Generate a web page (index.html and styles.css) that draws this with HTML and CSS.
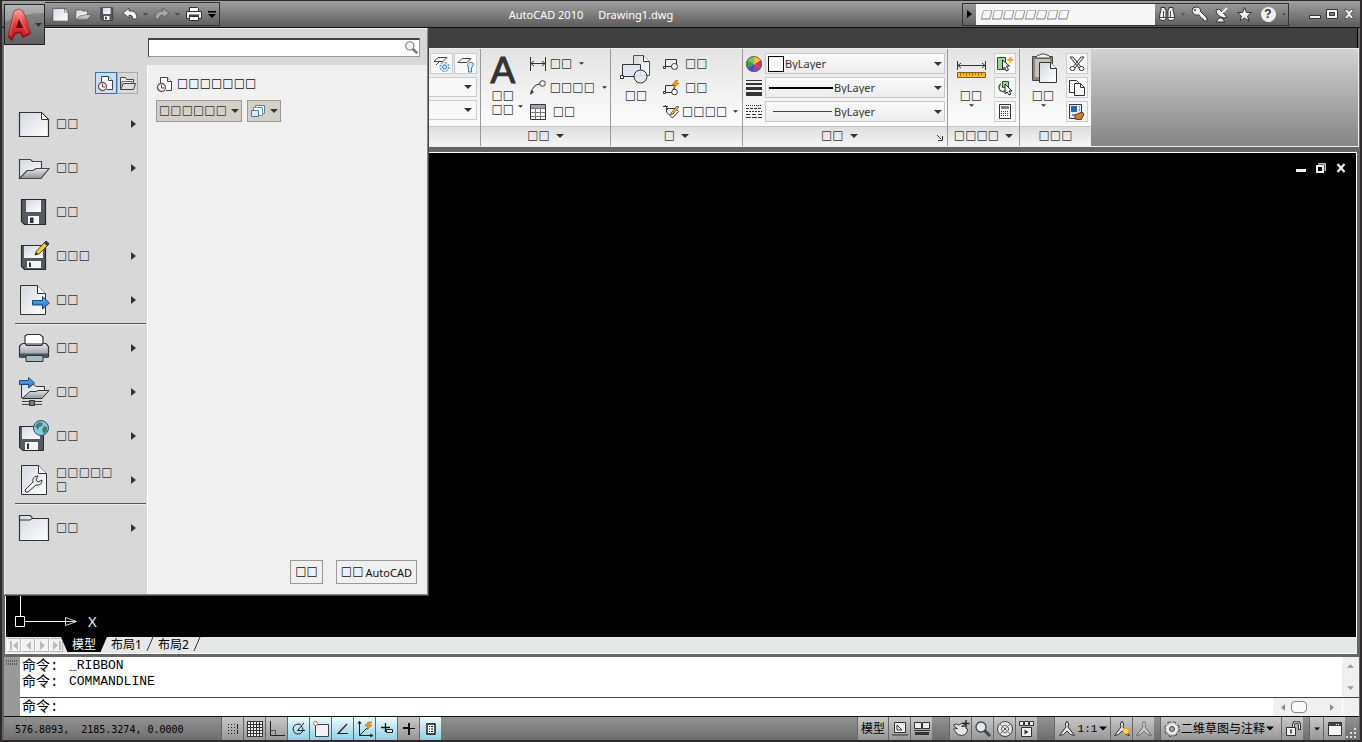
FILE: index.html
```html
<!DOCTYPE html>
<html lang="zh-CN">
<head>
<meta charset="utf-8">
<title>AutoCAD 2010 - Drawing1.dwg</title>
<link rel="stylesheet" href="styles.css">
</head>
<body>
<svg class="defs" aria-hidden="true">
  <defs>
    <linearGradient id="paper" x1="0" y1="0" x2="1" y2="1"><stop offset="0" stop-color="#d3d8e1"/><stop offset="1" stop-color="#ffffff"/></linearGradient>
    <linearGradient id="steel" x1="0" y1="0" x2="0" y2="1"><stop offset="0" stop-color="#e4e6ea"/><stop offset="1" stop-color="#8e939b"/></linearGradient>
    <linearGradient id="blue" x1="0" y1="0" x2="0" y2="1"><stop offset="0" stop-color="#64b4ee"/><stop offset="1" stop-color="#1d6fc4"/></linearGradient>
    <linearGradient id="red" x1="0" y1="0" x2="0" y2="1"><stop offset="0" stop-color="#f4aaa5"/><stop offset=".5" stop-color="#e2363a"/><stop offset="1" stop-color="#c3141c"/></linearGradient>
    <symbol id="down" viewBox="0 0 8 4"><path d="M0 0h8L4 4z" fill="currentColor"/></symbol>
    <symbol id="right" viewBox="0 0 5 8"><path d="M0 0l5 4-5 4z" fill="currentColor"/></symbol>
    <symbol id="new" viewBox="0 0 32 32"><path d="M1.500 4.500h22l7 7v17h-29z" fill="url(#paper)" stroke="#333" stroke-width="1.200"/><path d="M23.500 4.500v7h7z" fill="#fff" stroke="#333"/></symbol>
    <symbol id="open" viewBox="0 0 32 32"><path d="M1.500 26V7.500h11l2 2h9V17" fill="url(#paper)" stroke="#444" stroke-width="1.200"/><path d="M1.500 26.500L9 18.500h6l3-2h13l-8 10z" fill="url(#steel)" stroke="#444" stroke-width="1.200"/></symbol>
    <symbol id="save" viewBox="0 0 32 32"><path d="M3.500 3.500h24v25h-21l-3-3z" fill="#555a61" stroke="#25282c" stroke-width="1.200"/><path d="M8 4h15v12H8z" fill="url(#paper)"/><path d="M10 20h11v8H10z" fill="#f4f5f7"/><path d="M12 21.500h3.500V27H12z" fill="#30343a"/></symbol>
    <symbol id="recent" viewBox="0 0 18 18"><path d="M4.500 8V2.500h7l4 4v9H10" fill="#fff" stroke="#444"/><path d="M11.500 2.500v4h4" fill="#eef" stroke="#444"/><circle cx="5.500" cy="12.500" r="4" fill="#fff" stroke="#7a4a4a" stroke-width="1.300"/><path d="M5.500 10v3h2.500" fill="none" stroke="#7a3535"/></symbol>
    <symbol id="lens" viewBox="0 0 18 18"><path d="M10.500 10.500l5.500 5.500" stroke="#444" stroke-width="3"/><circle cx="7" cy="7" r="5" fill="#e1edf2" stroke="#444" stroke-width="1.300"/></symbol>
    <symbol id="printer" viewBox="0 0 32 32"><path d="M7 12V4l2-1.500h13L25 5v7z" fill="#fff" stroke="#333" stroke-width="1.200"/><path d="M1.500 14l3-2.500h2.500l1.500 2h15L25 11.500h3l2.500 3V25h-29z" fill="url(#steel)" stroke="#333" stroke-width="1.200"/><path d="M2 21.500h28V26H2z" fill="#4c545e"/><path d="M8 23.500h17v6H8z" fill="#a7bbc3" stroke="#333"/></symbol>
    <symbol id="smallprinter" viewBox="0 0 18 16"><path d="M4.500 6V1.500h8l1 1V6" fill="#fff" stroke="#333"/><path d="M1.500 5.500h15v7h-15z" fill="#eee" stroke="#333"/><path d="M4 9.500h10" stroke="#444" stroke-width="2"/><path d="M4.500 10.500h9v4h-9z" fill="#fff" stroke="#333"/></symbol>
    <symbol id="figure" viewBox="0 0 18 18"><path d="M9 1l1.700 3-.7 3 6.500 8.500-4-1L9 11l-3.500 3.500-4 1L8 7l-.7-3z" fill="#e4e4e4" stroke="#303030"/></symbol>
  </defs>
</svg>

<div class="window">
  <header class="titlebar">
    <nav class="quick" aria-label="快速访问工具栏">
      <button class="qb" aria-label="新建"><svg width="17" height="17"><use href="#new"/></svg></button>
      <button class="qb" aria-label="打开"><svg width="17" height="17"><use href="#open"/></svg></button>
      <button class="qb" aria-label="保存"><svg width="16" height="16"><use href="#save"/></svg></button>
      <button class="qb" aria-label="放弃"><svg width="16" height="14" viewBox="0 0 16 14"><path d="M1 6l6-5v3h3q5 1 5 8h-4q0-4-4-4v3z" fill="#f4f4f4" stroke="#333" stroke-width=".8"/></svg></button>
      <svg class="faint" width="5" height="3"><use href="#down"/></svg>
      <button class="qb" aria-label="重做"><svg width="16" height="14" viewBox="0 0 16 14"><path d="M15 6L9 1v3H6q-5 1-5 8h4q0-4 4-4v3z" fill="#a5a5a5" stroke="#555" stroke-width=".8"/></svg></button>
      <svg class="faint" width="5" height="3"><use href="#down"/></svg>
      <button class="qb" aria-label="打印"><svg width="18" height="16"><use href="#smallprinter"/></svg></button>
      <button class="qmore" aria-label="自定义"><svg width="8" height="7" viewBox="0 0 8 7"><path d="M0 0h8v1.500H0zM0 3h8L4 7z"/></svg></button>
    </nav>
    <h1 class="caption"><span>AutoCAD 2010</span><span>Drawing1.dwg</span></h1>
    <div class="info">
      <button class="expand" aria-label="展开"><svg width="5" height="8"><use href="#right"/></svg></button>
      <input class="help-search" type="text" placeholder="□□□□□□□□" aria-label="搜索帮助">
      <button class="ib" aria-label="搜索"><svg width="18" height="16" viewBox="0 0 18 16"><path d="M3 1.500h4v2h1v9q0 2-3 2t-3.500-2q0-5 1.500-8zM11 1.500h4v3q1.500 3 1.500 8 0 2-3.500 2t-3-2v-9h1z" fill="#f4f4f4" stroke="#333"/><path d="M8 6.500h2M2 11.500h6M10 11.500h6M5.500 5v6M12.500 5v6" stroke="#444"/></svg></button>
      <svg class="faint" width="4" height="3"><use href="#down"/></svg>
      <button class="ib key" aria-label="速博"><svg width="18" height="18" viewBox="0 0 18 18"><path d="M2 6q0-4 4-4 5 0 4.500 4.500L17 13v3h-3l-1-2-2-1-2-3q-6 1-7-4z" fill="#eee" stroke="#333"/><circle cx="5" cy="5" r="1" fill="#333"/></svg></button>
      <button class="ib" aria-label="通讯中心"><svg width="16" height="17" viewBox="0 0 16 17"><path d="M2 4q0 6 8 8l3-1L5 3zM5 12l-3 4h9l-3-4z" fill="#eee" stroke="#333"/><path d="M8 7l5-5" stroke="#eee" stroke-width="2"/></svg></button>
      <button class="ib" aria-label="收藏夹"><svg width="17" height="17" viewBox="0 0 17 17"><path d="M8.500 1.500l2 5h5l-4 3.500 1.500 5-4.500-3-4.500 3L5.500 10l-4-3.500h5z" fill="#eee" stroke="#333"/></svg></button>
      <button class="ib" aria-label="帮助"><span class="question">?</span></button>
      <svg class="faint" width="4" height="3"><use href="#down"/></svg>
    </div>
    <div class="winbtns">
      <button aria-label="最小化"><svg width="12" height="12" viewBox="0 0 12 12"><path d="M.500 7.500h11v3H.500z" fill="#f2f2f2" stroke="#333"/></svg></button>
      <button aria-label="最大化"><svg width="12" height="12" viewBox="0 0 12 12"><path d="M.500 1.500h11v9H.500zM3.500 4.500v3h5v-3z" fill="#f2f2f2" stroke="#333" fill-rule="evenodd"/></svg></button>
      <button aria-label="关闭"><svg width="12" height="12" viewBox="0 0 12 12"><path d="M1 1.500h3l2 2 2-2h3L7.500 6l3.500 4.500H8l-2-2-2 2H1L4.500 6z" fill="#f2f2f2" stroke="#333" stroke-width=".7"/></svg></button>
    </div>
  </header>

  <div class="tabstrip"></div>

  <section class="ribbon" aria-label="功能区">
    <div class="panel layers">
      <div class="panel-body">
        <div class="pair">
          <button class="tile" aria-label="冻结"><svg width="18" height="18" viewBox="0 0 18 18"><path d="M1 6.500l4-4h9l-4 4zM3 10l3-3" fill="#fff" stroke="#444"/><g stroke="#3f78ad" fill="#cfe8fa"><circle cx="11.500" cy="12" r="4.500" stroke-dasharray="2 1.500"/><circle cx="11.500" cy="12" r="2"/></g></svg></button>
          <button class="tile" aria-label="关闭图层"><svg width="18" height="18" viewBox="0 0 18 18"><path d="M1 7.500l4-4h9l-4 4z" fill="#fff" stroke="#444"/><path d="M11.500 13q-2-4 1-5.500 5-.5 3.500 3L14.500 13v4h-3z" fill="#d5ebfa" stroke="#3f78ad"/></svg></button>
        </div>
        <div class="stub"><svg width="8" height="4"><use href="#down"/></svg></div>
        <div class="stub"><svg width="8" height="4"><use href="#down"/></svg></div>
      </div>
      <div class="panel-title"></div>
    </div>

    <div class="panel annot">
      <div class="panel-body">
        <button class="big"><span class="letter">A</span><span>□□<br>□□</span></button>
        <svg class="side-arrow" width="5" height="3"><use href="#down"/></svg>
        <div class="rows">
          <button class="row"><svg width="16" height="14" viewBox="0 0 16 14"><path d="M.500 0v14M15.500 0v14M1 6.500h14M4 4L1 6.500 4 9M12 4l3 2.500L12 9" fill="none" stroke="#333"/></svg><span>□□</span><svg class="tiny" width="5" height="3"><use href="#down"/></svg></button>
          <button class="row"><svg width="16" height="15" viewBox="0 0 16 15"><path d="M1 14Q3 4 10 4" fill="none" stroke="#333"/><path d="M0 15l1-5 3 2z" fill="#333"/><circle cx="12.500" cy="3.500" r="2.800" fill="#fff" stroke="#333"/></svg><span>□□□□</span><svg class="tiny" width="5" height="3"><use href="#down"/></svg></button>
          <button class="row table"><svg width="16" height="16" viewBox="0 0 16 16"><path d="M.500 .500h15v15H.500z" fill="#fff" stroke="#333"/><path d="M1 1h14v3H1z" fill="#9aa3af"/><path d="M1 4.500h14M1 8.500h14M1 12.500h14M5.500 4v11M10.500 4v11" stroke="#777"/></svg><span>□□</span></button>
        </div>
      </div>
      <div class="panel-title"><span>□□</span><svg width="8" height="4"><use href="#down"/></svg></div>
    </div>

    <div class="panel block">
      <div class="panel-body">
        <button class="big"><svg width="32" height="32" viewBox="0 0 32 32"><path d="M13.500 2.500h10l6 6v14h-16z" fill="url(#paper)" stroke="#555"/><path d="M23.500 2.500v6h6" fill="#fff" stroke="#333"/><path d="M2.500 11.500h18v12h-18z" fill="#dfe6f1" stroke="#333"/><circle cx="20.500" cy="23.500" r="6.500" fill="#e3e9f1" fill-opacity=".9" stroke="#333"/><path d="M.500 22.500h3v3h-3z" fill="#fff" stroke="#333"/></svg><span>□□</span></button>
        <div class="rows">
          <button class="row"><svg width="16" height="14" viewBox="0 0 16 14"><path d="M2.500 2.500h11v7h-11z" fill="#e9eef4" stroke="#333"/><circle cx="11.500" cy="9.500" r="3" fill="#fff" stroke="#333"/><path d="M.500 9.500h2v2h-2z" fill="#fff" stroke="#333"/></svg><span>□□</span></button>
          <button class="row"><svg width="16" height="16" viewBox="0 0 16 16"><path d="M2.500 5.500h9v7h-9z" fill="#e9eef4" stroke="#333"/><circle cx="11.500" cy="12" r="2.800" fill="#fff" stroke="#333"/><path d="M.500 11.500h2v2h-2z" fill="#fff" stroke="#333"/><path d="M13 0L9 5h3l-2 4 6-6h-3l2-3z" fill="#f3a21d" stroke="#a8690b" stroke-width=".6"/></svg><span>□□</span></button>
          <button class="row tag"><svg width="16" height="16" viewBox="0 0 16 16"><path d="M3.500 4.500h9l3 3-6 6.500-6-6z" fill="#fff" stroke="#333"/><path d="M0 2.500h5M2 1l3 5" stroke="#333" fill="none"/><path d="M8 9l6-7 2 1-6 7-3 1z" fill="#f0b93c" stroke="#443214" stroke-width=".7"/></svg><span>□□□□</span><svg class="tiny" width="5" height="3"><use href="#down"/></svg></button>
        </div>
      </div>
      <div class="panel-title"><span>□</span><svg width="8" height="4"><use href="#down"/></svg></div>
    </div>

    <div class="panel props">
      <div class="panel-body">
        <div class="prop"><svg width="16" height="16" viewBox="0 0 16 16"><path d="M8 8V0a8 8 0 0 0-7 4z" fill="#7ac15a"/><path d="M8 8L1 4a8 8 0 0 0 0 8z" fill="#3f9b47"/><path d="M8 8l-7 4a8 8 0 0 0 7 4z" fill="#4055c0"/><path d="M8 8v8a8 8 0 0 0 7-4z" fill="#9a46ae"/><path d="M8 8l7 4a8 8 0 0 0 0-8z" fill="#df362e"/><path d="M8 8l7-4a8 8 0 0 0-7-4z" fill="#f2c53d"/><circle cx="8" cy="8" r="7.500" fill="none" stroke="#666"/></svg>
          <div class="combo color"><select aria-label="颜色"><option>ByLayer</option></select><span class="swatch"></span><svg class="drop" width="8" height="4"><use href="#down"/></svg></div></div>
        <div class="prop"><svg width="16" height="16" viewBox="0 0 16 16"><path d="M0 0h16v1H0zM0 3h16v2H0zM0 7h16v3H0zM0 12h16v4H0z" fill="#333"/></svg>
          <div class="combo line"><select aria-label="线宽"><option>ByLayer</option></select><span class="stroke thick"></span><svg class="drop" width="8" height="4"><use href="#down"/></svg></div></div>
        <div class="prop"><svg width="16" height="16" viewBox="0 0 16 16"><path d="M0 1.500h16" stroke="#333" stroke-dasharray="1 1"/><path d="M0 4.500h16" stroke="#333" stroke-dasharray="3 1"/><path d="M0 7.500h16" stroke="#333" stroke-dasharray="2 1"/><path d="M0 10.500h16" stroke="#333" stroke-dasharray="4 2"/><path d="M0 13.500h16" stroke="#333" stroke-dasharray="5 1"/></svg>
          <div class="combo line"><select aria-label="线型"><option>ByLayer</option></select><span class="stroke"></span><svg class="drop" width="8" height="4"><use href="#down"/></svg></div></div>
      </div>
      <div class="panel-title"><span>□□</span><svg width="8" height="4"><use href="#down"/></svg><button class="launcher" aria-label="对话框"><svg width="6" height="6" viewBox="0 0 6 6"><path d="M0 0l4 4M5.500 1v4.500H1" fill="none" stroke="#333"/></svg></button></div>
    </div>

    <div class="panel utils">
      <div class="panel-body">
        <button class="big"><svg width="32" height="32" viewBox="0 0 32 32"><path d="M2.500 8v9M30.500 8v9M3 12.500h27M6 10l-3 2.500L6 15M27 10l3 2.500-3 2.500" fill="none" stroke="#333"/><path d="M2.500 19.500h28v5h-28z" fill="#f4bd31" stroke="#8a5c08"/><path d="M5.500 20v3M8.500 20v2M11.500 20v3M14.500 20v2M17.500 20v3M20.500 20v2M23.500 20v3M26.500 20v2" stroke="#9b6d10"/></svg><span>□□</span><svg class="tiny" width="5" height="3"><use href="#down"/></svg></button>
        <div class="tiles">
          <button class="tile" aria-label="全部选择"><svg width="18" height="16" viewBox="0 0 18 16"><path d="M1.500 1.500h8v12h-8z" fill="#9fd497" stroke="#24562a"/><path d="M6.500 4v9l2-2 2 4 2-1-2-4h3z" fill="#fff" stroke="#222"/><path d="M14 1l-3 4h3l-1 3 5-5h-3l1-2z" fill="#f4a51f"/></svg></button>
          <button class="tile" aria-label="快速选择"><svg width="18" height="16" viewBox="0 0 18 16"><path d="M6.500 1.500h6v6h-6z" fill="#9fd497" stroke="#24562a"/><path d="M5 4a4 4 0 1 0 4 7" fill="none" stroke="#356e3a" stroke-width="1.500"/><path d="M9 4v10l2-2 2 3 2-1-2-3h3z" fill="#fff" stroke="#222"/></svg></button>
          <button class="tile" aria-label="计算器"><svg width="12" height="15" viewBox="0 0 12 15"><path d="M.500 .500h11v14H.500z" fill="#fff" stroke="#333"/><path d="M2 2h8v3H2z" fill="#74808f"/><path d="M2 7.500h8M2 9.500h8M2 11.500h8" stroke="#333" stroke-dasharray="1 1"/></svg></button>
        </div>
      </div>
      <div class="panel-title"><span>□□□□</span><svg width="8" height="4"><use href="#down"/></svg></div>
    </div>

    <div class="panel clip">
      <div class="panel-body">
        <button class="big"><svg width="32" height="32" viewBox="0 0 32 32"><path d="M5.500 3.500h20v24h-20z" fill="#8c8680" stroke="#47423d"/><path d="M8 6h15v18H8z" fill="#c7c1b8"/><path d="M8 5l3-3h2l1-1h4l1 1h2l3 3z" fill="#f4f4f4" stroke="#444"/><path d="M12.500 9.500h11l6 6v14h-17z" fill="url(#paper)" stroke="#333"/><path d="M23.500 9.500v6h6" fill="#fff" stroke="#333"/></svg><span>□□</span><svg class="tiny" width="5" height="3"><use href="#down"/></svg></button>
        <div class="tiles">
          <button class="tile" aria-label="剪切"><svg width="16" height="16" viewBox="0 0 16 16"><path d="M1 1l3 0 8 10-2 1zM15 1l-3 0-8 10 2 1z" fill="#fff" stroke="#333"/><ellipse cx="3.500" cy="12.500" rx="2.500" ry="2" fill="#fff" stroke="#333"/><ellipse cx="12.500" cy="12.500" rx="2.500" ry="2" fill="#fff" stroke="#333"/></svg></button>
          <button class="tile" aria-label="复制"><svg width="16" height="16" viewBox="0 0 16 16"><path d="M.500 .500h7l2 2v10h-9z" fill="#fff" stroke="#333"/><path d="M5.500 3.500h6l4 4v8h-10z" fill="#fff" stroke="#333"/><path d="M11.500 3.500v4h4" fill="none" stroke="#333"/></svg></button>
          <button class="tile" aria-label="特性匹配"><svg width="16" height="16" viewBox="0 0 16 16"><path d="M.500 .500h12v14H.500z" fill="#e5edf5" stroke="#243a59"/><path d="M2 2h6v6H2z" fill="#2d67a8"/><path d="M10 3h1M10 6h1M3 11h3" stroke="#333"/><path d="M6 11l7-3 2 2-3 6-6-1z" fill="#c9812e" stroke="#5c3610"/></svg></button>
        </div>
      </div>
      <div class="panel-title"><span>□□□</span></div>
    </div>
  </section>

  <main class="drawing">
    <div class="docbtns">
      <button aria-label="最小化"><svg width="10" height="10" viewBox="0 0 10 10"><path d="M0 6h10v3H0z" fill="#eee"/></svg></button>
      <button aria-label="还原"><svg width="10" height="10" viewBox="0 0 10 10"><path d="M2 .800h7.200V8" fill="none" stroke="#eee" stroke-width="1.200"/><path d="M1 3h6v6H1z" fill="none" stroke="#eee" stroke-width="2"/></svg></button>
      <button aria-label="关闭"><svg width="10" height="10" viewBox="0 0 10 10"><path d="M1.500 1l7 8M8.500 1l-7 8" stroke="#eee" stroke-width="2.200"/></svg></button>
    </div>
    <div class="ucs"><svg width="74" height="60" viewBox="0 0 74 60"><path d="M6.500 0v39M11 44.500h40" stroke="#fff"/><path d="M1.500 39.500h9v10h-9z" fill="#000" stroke="#fff"/><path d="M51.500 40.500l11 4-11 4zM52 44.500h10" fill="#000" stroke="#ddd"/></svg><span>X</span></div>
  </main>

  <nav class="layouts" aria-label="布局">
    <div class="steps">
      <button aria-label="第一个"><svg width="9" height="9" viewBox="0 0 9 9"><path d="M1 0v9" stroke="#bbb" stroke-width="2"/><path d="M8 0v9L3 4.500z" fill="#bbb"/></svg></button>
      <button aria-label="上一个"><svg width="5" height="9" viewBox="0 0 5 9"><path d="M5 0v9L0 4.500z" fill="#bbb"/></svg></button>
      <button aria-label="下一个"><svg width="5" height="9" viewBox="0 0 5 9"><path d="M0 0v9l5-4.500z" fill="#bbb"/></svg></button>
      <button aria-label="最后一个"><svg width="9" height="9" viewBox="0 0 9 9"><path d="M8 0v9" stroke="#bbb" stroke-width="2"/><path d="M1 0v9l5-4.500z" fill="#bbb"/></svg></button>
    </div>
    <button class="layout active">模型</button>
    <button class="layout">布局1</button><svg class="slant" width="8" height="14" viewBox="0 0 8 14"><path d="M1 14L7 0" stroke="#333"/></svg>
    <button class="layout">布局2</button><svg class="slant" width="8" height="14" viewBox="0 0 8 14"><path d="M1 14L7 0" stroke="#333"/></svg>
  </nav>

  <section class="command" aria-label="命令行">
    <div class="grip"><svg width="12" height="6" viewBox="0 0 12 6"><path d="M0 1h12M0 4h12" stroke="#222" stroke-dasharray="1 1"/></svg></div>
    <div class="console">
      <div class="history">
        <div class="log"><p><span class="prompt">命令:</span>_RIBBON</p><p><span class="prompt">命令:</span>COMMANDLINE</p></div>
        <div class="vscroll"><svg width="7" height="4"><use href="#down"/></svg><svg width="7" height="4"><use href="#down"/></svg></div>
      </div>
      <div class="entry">
        <label class="prompt" for="cmd">命令:</label><input id="cmd" type="text">
        <div class="hscroll"><svg width="4" height="7"><use href="#right"/></svg><span class="thumb"></span><svg width="4" height="7"><use href="#right"/></svg></div>
        <div class="corner"></div>
      </div>
    </div>
  </section>

  <footer class="status">
    <output class="coords">576.8093,  2185.3274, 0.0000</output>
    <div class="toggles">
      <button aria-label="捕捉"><svg width="16" height="16" viewBox="0 0 16 16"><path d="M3 3.500h8M3 6.500h8M3 9.500h8M3 12.500h10" stroke="#222" stroke-dasharray="1 2"/><path d="M12.500 3v10" stroke="#222" stroke-dasharray="5 1"/></svg></button>
      <button aria-label="栅格"><svg width="16" height="16" viewBox="0 0 16 16"><path d="M0 0h16v16H0z" fill="#eee"/><path d="M0 .500h16M0 3.500h16M0 6.500h16M0 9.500h16M0 12.500h16M0 15.500h16M.500 0v16M3.500 0v16M6.500 0v16M9.500 0v16M12.500 0v16M15.500 0v16" stroke="#333"/></svg></button>
      <button aria-label="正交"><svg width="16" height="16" viewBox="0 0 16 16"><path d="M1.500 0v14.500H16" fill="none" stroke="#222"/><path d="M2 9.500h4.500V14" fill="none" stroke="#555"/></svg></button>
      <button class="on" aria-label="极轴"><svg width="16" height="16" viewBox="0 0 16 16"><path d="M10 4a5 5 0 1 0 2 5M6.500 9.500H14M6.500 9.500L13 2" fill="none" stroke="#222"/><path d="M10 5q2 1 2 4" fill="none" stroke="#222"/></svg></button>
      <button class="on" aria-label="对象捕捉"><svg width="16" height="16" viewBox="0 0 16 16"><path d="M2.500 3.500h13v12h-13z" fill="#f2f2f2" stroke="#444"/><circle cx="2.500" cy="2.500" r="2" fill="#fff" stroke="#e07020"/></svg></button>
      <button class="on" aria-label="对象追踪"><svg width="16" height="16" viewBox="0 0 16 16"><path d="M12 3L3 12.500h10" fill="none" stroke="#222" stroke-width="1.200"/></svg></button>
      <button class="on" aria-label="动态 UCS"><svg width="16" height="16" viewBox="0 0 16 16"><path d="M2.500 1v13.500H15M1 3l1.500-3L4 3M13 13l3 1.500-3 1.500M3 14l7-7" fill="none" stroke="#222"/><path d="M11 1L8 5h3l-1 4 5-5h-3l3-3z" fill="#f3a21d" stroke="#95600e" stroke-width=".5"/></svg></button>
      <button class="on" aria-label="动态输入"><svg width="16" height="16" viewBox="0 0 16 16"><path d="M2 6.500h9M6.500 2v9" stroke="#111" stroke-width="1.300"/><path d="M7.500 8.500h6v3h-6z" fill="#eee" stroke="#222"/></svg></button>
      <button aria-label="线宽"><svg width="16" height="16" viewBox="0 0 16 16"><path d="M2 7.500h12" stroke="#111"/><path d="M2 7h6" stroke="#111" stroke-width="2"/><path d="M8 2v12" stroke="#111" stroke-width="2"/></svg></button>
      <button class="on" aria-label="快捷特性"><svg width="16" height="16" viewBox="0 0 16 16"><path d="M4 3h8v10H4z" fill="#fff" stroke="#111" stroke-width="1.400"/><path d="M6 5.500h4M6 8h4M6 10.500h4" stroke="#111" stroke-dasharray="1 1 2 1"/></svg></button>
    </div>
    <div class="tray">
      <div class="group"><button class="word">模型</button><button aria-label="模型布局"><svg width="16" height="16" viewBox="0 0 16 16"><path d="M2.500 1.500h11v10h-11z" fill="#eee" stroke="#333"/><path d="M5 4v5h5z" fill="none" stroke="#333"/><path d="M0 14h16" stroke="#333"/></svg></button><button aria-label="快速查看"><svg width="16" height="16" viewBox="0 0 16 16"><path d="M.500 1.500h7v6h-7zM8.500 1.500h7v6h-7z" fill="#eee" stroke="#333"/><path d="M0 9.500h16" stroke="#333"/><path d="M1 12.500h14" stroke="#333" stroke-width="3"/></svg></button></div>
      <div class="group"><button aria-label="平移"><svg width="18" height="18" viewBox="0 0 18 18"><path d="M1.500 5q3-2 5 0l5-2q2 0 1 2l-3 1.500 4-.5q2 1 0 2l2 1q0 6-6 6.500-5 0-6-4L1.500 9l1-1 3 1z" fill="#e5e5e5" stroke="#333"/><path d="M14 0v7M10.500 3.500h7" stroke="#222" stroke-width="1.300"/></svg></button><button aria-label="缩放"><svg width="18" height="18"><use href="#lens"/></svg></button><button aria-label="控制盘"><svg width="18" height="18" viewBox="0 0 18 18"><circle cx="9" cy="9" r="7.500" fill="#e3e3e3" stroke="#444"/><circle cx="9" cy="9" r="3.500" fill="#fff" stroke="#555"/><path d="M4 4l10 10M14 4L4 14" stroke="#777"/><circle cx="9" cy="9" r="1.300" fill="#555"/></svg></button><button aria-label="运动显示"><svg width="16" height="16" viewBox="0 0 16 16"><path d="M.500 .500h4v4h-4zM5.500 .500h4v4h-4zM10.500 .500h4v4h-4zM2.500 6.500h10v9h-10z" fill="#eee" stroke="#333"/><path d="M5.500 8.500v5l4-2.500z" fill="#333"/></svg></button></div>
      <div class="group"><button class="scale"><svg width="18" height="18"><use href="#figure"/></svg><span>1:1</span><svg width="8" height="5"><use href="#down"/></svg></button><button aria-label="注释可见性"><svg width="18" height="18" viewBox="0 0 18 18"><use href="#figure"/><circle cx="13" cy="11" r="3" fill="#ffd257" stroke="#e89a31"/></svg></button><button aria-label="自动缩放"><svg class="dim" width="18" height="18"><use href="#figure"/></svg></button></div>
      <div class="group near"><button class="workspace"><svg width="16" height="16" viewBox="0 0 16 16"><circle cx="8" cy="8" r="6.200" fill="none" stroke="#444" stroke-width="3.200" stroke-dasharray="2.800 2.070"/><circle cx="8" cy="8" r="5.800" fill="#ececec"/><circle cx="8" cy="8" r="6" fill="none" stroke="#ececec" stroke-width="1.600" stroke-dasharray="1.800 2.910" stroke-dashoffset="-.5"/><circle cx="8" cy="8" r="2.500" fill="#aaa" stroke="#444"/></svg><span>二维草图与注释</span><svg width="8" height="5"><use href="#down"/></svg></button><button aria-label="锁定"><svg width="16" height="16" viewBox="0 0 16 16"><path d="M8.500 8V4q0-3 3-3t3 3v5" fill="none" stroke="#333" stroke-width="3"/><path d="M8.500 8V4q0-3 3-3t3 3v4" fill="none" stroke="#eee"/><path d="M1.500 6.500h9v8h-9z" fill="#eee" stroke="#333"/><path d="M6 8.500v4" stroke="#333" stroke-width="1.500"/></svg></button></div>
      <div class="group near"><button class="slim" aria-label="状态栏菜单"><svg width="6" height="4"><use href="#down"/></svg></button><button aria-label="全屏显示"><svg width="14" height="14" viewBox="0 0 14 14"><path d="M.500 .500h13v13H.500z" fill="#f4f4f4" stroke="#333"/><path d="M1 1h12v3H1z" fill="#444"/><path d="M8 2.500h4" stroke="#fff" stroke-dasharray="1 1"/></svg></button></div>
      <svg class="sizer" width="12" height="12" viewBox="0 0 12 12"><path d="M8 1h2v2H8zM4 5h2v2H4zM8 5h2v2H8zM0 9h2v2H0zM4 9h2v2H4zM8 9h2v2H8z" fill="#ddd"/></svg>
    </div>
  </footer>

  <aside class="appmenu">
    <div class="menu-top"><input type="text" aria-label="搜索命令"><svg width="15" height="15"><use href="#lens"/></svg></div>
    <div class="menu-main">
      <nav class="menu-side">
        <div class="views"><button class="on" aria-label="最近使用的文档"><svg width="18" height="18"><use href="#recent"/></svg></button><button aria-label="打开的文档"><svg width="18" height="18" viewBox="0 0 18 18"><path d="M1.500 15V3.500h5l1 2h7v3" fill="#eee" stroke="#444"/><path d="M3 12V7.500h10V9" fill="#fff" stroke="#666"/><path d="M1.500 15.500l3-6h12l-2 6z" fill="#ddd" stroke="#444"/></svg></button></div>
        <button class="item"><svg width="32" height="32"><use href="#new"/></svg><span>□□</span><svg class="more" width="5" height="8"><use href="#right"/></svg></button>
        <button class="item"><svg width="32" height="32"><use href="#open"/></svg><span>□□</span><svg class="more" width="5" height="8"><use href="#right"/></svg></button>
        <button class="item"><svg width="32" height="32"><use href="#save"/></svg><span>□□</span></button>
        <button class="item"><svg width="32" height="32" viewBox="0 0 32 32"><path d="M3.500 5.500h24v24h-21l-3-3z" fill="#555a61" stroke="#25282c" stroke-width="1.200"/><path d="M6 6h19v12H6z" fill="url(#paper)"/><path d="M9 21h14v7H9z" fill="#f4f5f7"/><path d="M11 22.500h2V27h-2z" fill="#30343a"/><path d="M17 15l1.500-4L28 1l3 3-10 10z" fill="#f3c744" stroke="#5b4510"/><path d="M26 3l2-2.500 3.500 3L29 6z" fill="#3b3f45"/><path d="M17 15l1-3 2 2z" fill="#333"/></svg><span>□□□</span><svg class="more" width="5" height="8"><use href="#right"/></svg></button>
        <button class="item"><svg width="32" height="32" viewBox="0 0 32 32"><path d="M2.500 1.500h17l8 8v21h-25z" fill="url(#paper)" stroke="#333"/><path d="M19.500 1.500v8h8" fill="#fff" stroke="#333"/><path d="M14.500 16.500h10v-4l7 6.500-7 6v-4h-10z" fill="url(#blue)" stroke="#174a81"/></svg><span>□□</span><svg class="more" width="5" height="8"><use href="#right"/></svg></button>
        <hr>
        <button class="item"><svg width="32" height="32"><use href="#printer"/></svg><span>□□</span><svg class="more" width="5" height="8"><use href="#right"/></svg></button>
        <button class="item"><svg width="32" height="32" viewBox="0 0 32 32"><path d="M3.500 22V8.500h12l3 2h8V16" fill="url(#paper)" stroke="#333"/><path d="M4 22.500l8-7h6l2-1h11l-7 8z" fill="url(#steel)" stroke="#333"/><path d="M1.500 4.500h9v-3l6 5.500-6 5v-3.500h-9z" fill="url(#blue)" stroke="#174a81"/><path d="M4 25.500h20M4 28.500h20" stroke="#444"/><path d="M11.500 24.500h5v5h-5z" fill="#777" stroke="#333"/></svg><span>□□</span><svg class="more" width="5" height="8"><use href="#right"/></svg></button>
        <button class="item"><svg width="32" height="32" viewBox="0 0 32 32"><path d="M1.500 6.500h24v24h-21l-3-3z" fill="#555a61" stroke="#25282c"/><path d="M4 7h18v12H4z" fill="url(#paper)"/><path d="M7 22h13v8H7z" fill="#f5f5f5"/><path d="M9 23.500h2V29H9z" fill="#333"/><circle cx="23" cy="8" r="7.500" fill="#8cc5dc" stroke="#25536a"/><path d="M17 6l4-4 4 1-1 3-3 1-1 3zM26 6l3 1v4l-3 3-2-4z" fill="#39856c"/></svg><span>□□</span><svg class="more" width="5" height="8"><use href="#right"/></svg></button>
        <button class="item"><svg width="32" height="32" viewBox="0 0 32 32"><path d="M3.500 1.500h17l8 8v21h-25z" fill="url(#paper)" stroke="#333"/><path d="M20.500 1.500v8h8" fill="#fff" stroke="#333"/><path d="M7 26l8-8q-1-5 4-6l1 0-2 4 2 2 4-2q0 6-6 5l-8 7q-3 1-3-2z" fill="#eee" stroke="#333"/></svg><span>□□□□□<br>□</span><svg class="more" width="5" height="8"><use href="#right"/></svg></button>
        <hr>
        <button class="item"><svg width="32" height="32" viewBox="0 0 32 32"><path d="M1.500 28.500v-25h11l2 3h16v22z" fill="url(#paper)" stroke="#333" stroke-width="1.200"/><path d="M2 8h10l3-2" fill="none" stroke="#333"/></svg><span>□□</span><svg class="more" width="5" height="8"><use href="#right"/></svg></button>
      </nav>
      <section class="docs">
        <h2><svg width="18" height="18"><use href="#recent"/></svg><span>□□□□□□□</span></h2>
        <div class="filters">
          <button class="sort"><span>□□□□□□</span><svg width="8" height="4"><use href="#down"/></svg></button>
          <button class="sort" aria-label="显示方式"><svg width="16" height="14" viewBox="0 0 16 14"><path d="M5.500 1.500h9v8h-9z" fill="#fff" stroke="#4b87ae"/><path d="M3.500 3.500h9v8h-9z" fill="#fff" stroke="#888"/><path d="M1.500 6.500h7v6h-7z" fill="#d7edfa" stroke="#3b7da8"/></svg><svg width="8" height="4"><use href="#down"/></svg></button>
        </div>
        <div class="actions"><button><span>□□</span></button><button><span>□□</span>AutoCAD</button></div>
      </section>
    </div>
  </aside>

  <button class="logo" aria-label="应用程序菜单"><svg width="39" height="38" viewBox="0 0 39 38"><path d="M0 16Q20 7 39 7v31H0z" fill="#4c4c4c" opacity=".35"/><path d="M3 30L9 5l5-2 4 2 8 22-8 4-3-4-5 1-3 6z" fill="url(#red)" stroke="#9c2226" stroke-width=".7"/><path d="M11 22l3-9 4 9z" fill="#5a1114"/><path d="M3 30l4 4 3-7 6-1 2 5 8-4" fill="none" stroke="#8d0d14" stroke-width="1.300"/><path d="M10 5l-5 24M14 9l8 18" stroke="#f7a39d" stroke-width=".8" opacity=".6"/><path d="M30 17h7l-3.500 4z" fill="#333"/></svg></button>
</div>
</body>
</html>
```

FILE: styles.css
```css
* { box-sizing: border-box; }
body {
  margin: 0;
  font: 11px/13px "Noto Sans", "DejaVu Sans", "Noto Sans CJK SC", sans-serif;
  color: #333;
}
button, input, select { font: inherit; color: inherit; }
button { margin: 0; padding: 0; border: 0; background: none; display: flex; align-items: center; justify-content: center; }
svg { display: block; flex: none; }
.defs { position: absolute; width: 0; height: 0; }
h1, h2, p { margin: 0; font-size: 11px; font-weight: normal; }

.window {
  position: relative;
  display: flex;
  flex-direction: column;
  height: 100vh;
  overflow: hidden;
  background: #666;
  border: 2px solid #2e2a2b;
  border-top-width: 1px;
}

/* Title bar */
.titlebar {
  display: flex;
  align-items: center;
  height: 27px;
  flex: none;
  padding: 0 5px 0 43px;
  background: linear-gradient(#a0a0a0, #5c5c5c);
  border-bottom: 1px solid #111;
}
.quick { display: flex; align-items: center; height: 24px; padding-left: 4px; border: 1px solid #333; border-left: 0; }
.qb { width: 23px; height: 20px; }
.qmore { width: 14px; height: 20px; }
.faint { color: #444; margin: 0 2px; }
.caption { display: flex; gap: 15px; color: #fff; margin: 0 auto; }
.info { display: flex; align-items: center; height: 23px; border: 1px solid #333; }
.expand { width: 13px; height: 21px; color: #000; }
.help-search { width: 179px; height: 21px; border: 0; padding: 0 4px; background: #f6f6f6; font-family: "Noto Sans CJK SC", sans-serif; font-style: italic; }
.help-search::placeholder { color: #000; opacity: 1; }
.ib { width: 24px; height: 20px; }
.ib.key + .ib { width: 21px; }
.question { width: 15px; height: 15px; border-radius: 50%; background: #eee; color: #333; font: bold 12px/15px "Liberation Sans", sans-serif; }
.winbtns { display: flex; gap: 5px; margin-left: 20px; }

.tabstrip { flex: none; height: 20px; margin: 0 2px; background: #404040; border-right: 1px solid #000; }

/* Ribbon */
.ribbon {
  display: flex;
  flex: none;
  height: 99px;
  margin: 0 1px 0 2px;
  background: linear-gradient(#d2d2d2, #858585);
  border: 1px solid #eee;
  border-left: 0;
}
.panel { display: flex; flex-direction: column; flex: none; border-right: 1px solid #999; background: linear-gradient(#e3e3e3, #fafafa 70%); }
.panel-body { display: flex; height: 77px; padding: 4px 3px 0; }
.panel-title { display: flex; align-items: center; justify-content: center; gap: 6px; flex: 1; padding-bottom: 1px; border-top: 1px solid #c4c4c4; background: linear-gradient(#dedede, #f5f5f5); }
.panel-title span, .row span, .big span, .item span, .docs span { padding-bottom: 2px; font-size: 12px; line-height: 14px; }
.layers { width: 477px; }
.layers .panel-body { flex-direction: column; align-items: flex-end; gap: 3px; }
.pair { display: flex; gap: 1px; }
.tile { width: 22px; height: 21px; background: #f8f8f8; border: 1px solid #ccc; }
.pair .tile { width: 23px; }
.stub { display: flex; align-items: center; justify-content: flex-end; width: 80px; height: 20px; padding: 0 4px; border: 1px solid #ccc; background: #f8f8f8; }
.annot { width: 130px; }
.block { width: 132px; }
.props { width: 205px; }
.utils { width: 72px; }
.clip { width: 71px; border-right: 0; }
.big { flex-direction: column; justify-content: flex-start; width: 40px; }
.big > svg:first-child { margin-bottom: 3px; }
.big .letter { padding: 0; font: 37px/35px "Liberation Sans", sans-serif; -webkit-text-stroke: 1px #333; }
.side-arrow { margin: 52px 0 0 -4px; }
.rows { display: flex; flex-direction: column; gap: 3px; margin-left: 7px; }
.row { height: 21px; justify-content: flex-start; gap: 4px; white-space: nowrap; }
.row .tiny { margin-left: 3px; }
.row.table { gap: 7px; }
.annot .big { width: 38px; }
.block .panel-body { padding-left: 5px; }
.block .row { gap: 6px; }
.block .row.tag { gap: 3px; }
.props .panel-body { flex-direction: column; gap: 3px; padding-right: 2px; }
.prop { display: flex; align-items: center; gap: 3px; }
.combo { display: grid; align-items: center; flex: 1; }
.combo > * { grid-area: 1 / 1; pointer-events: none; }
.combo select { width: 100%; height: 21px; appearance: none; border: 1px solid #c8c8c8; border-radius: 0; padding: 0 14px 0 19px; background: linear-gradient(#fafafa, #ececec); pointer-events: auto; }
.combo.line select { padding-left: 68px; }
.drop { justify-self: end; margin-right: 3px; }
.swatch { width: 16px; height: 16px; margin-left: 3px; background: #fff; border: 1px solid #000; }
.stroke { width: 59px; height: 1px; margin-left: 8px; background: #444; }
.stroke.thick { width: 64px; height: 2px; margin-left: 4px; background: #000; }
.props .panel-title { padding-left: 78px; justify-content: flex-start; }
.launcher { margin: 4px 4px 0 auto; }
.tiles { display: flex; flex-direction: column; gap: 3px; margin-left: 3px; }

/* Drawing area */
.drawing {
  display: flex;
  flex-direction: column;
  justify-content: space-between;
  flex: 1;
  min-height: 0;
  margin: 5px 3px 0;
  background: #000;
  border: 1px solid #fff;
  border-bottom: 0;
}
.docbtns { display: flex; justify-content: flex-end; gap: 10px; padding: 10px; }
.ucs { display: flex; align-items: flex-end; padding-left: 8px; color: #fff; font: 15px/15px "Open Sans", sans-serif; }
.ucs span { padding-bottom: 8px; }

.layouts { display: flex; flex: none; height: 17px; margin: 0 3px; padding: 0 2px; background: #e6e8e7; border-bottom: 1px solid #fff; font-size: 12px; color: #000; }
.steps { display: flex; padding-top: 1px; }
.steps button { width: 14px; height: 14px; background: #f3f3f3; border: 1px solid #bbb; border-left-color: #fff; }
.layout { padding: 0 4px; height: 15px; }
.layout.active { width: 46px; margin-left: -2px; padding: 0; background: #000; color: #fff; clip-path: polygon(0 0, 100% 0, 86% 100%, 14% 100%); }

/* Command line */
.command { display: flex; flex: none; height: 59px; margin: 3px 1px 0 2px; background: #fff; color: #000; }
.grip { width: 16px; padding: 3px 2px; background: #999; }
.console { flex: 1; display: flex; flex-direction: column; font: 13px/16px "Liberation Mono", "Noto Sans CJK SC", monospace; }
.history { display: flex; justify-content: space-between; height: 41px; border-bottom: 1px solid #444; }
.log { padding: 1px 0 0 2px; }
.log p { display: flex; font-size: 13px; height: 16px; }
.prompt { width: 47px; font-size: 14px; }
.vscroll { display: flex; flex-direction: column; align-items: center; justify-content: space-between; width: 17px; padding: 7px 0; background: #f0f0f0; color: #999; }
.vscroll svg:first-child { transform: rotate(180deg); }
.entry { display: flex; align-items: center; flex: 1; padding-left: 2px; }
.entry input { flex: 1; border: 0; outline: 0; padding: 0; height: 16px; }
.hscroll { display: flex; align-items: center; align-self: stretch; width: 69px; padding: 0 8px; background: #f0f0f0; color: #888; }
.hscroll svg:first-child { transform: rotate(180deg); }
.hscroll svg:last-child { margin-left: auto; }
.thumb { width: 16px; height: 12px; margin-left: 6px; border: 1px solid #888; border-radius: 4px; background: #fafafa; }
.corner { width: 17px; align-self: stretch; background: #f0f0f0; border-left: 1px solid #fff; }

/* Status bar */
.status { display: flex; align-items: stretch; flex: none; height: 24px; margin: 0 1px 0 2px; background: linear-gradient(#929292, #6e6e6e); border-top: 1px solid #111; color: #000; }
.coords { width: 217px; padding-left: 11px; white-space: pre; font: 10px/25px "DejaVu Sans Mono", monospace; }
.toggles, .group { display: flex; }
.status button { width: 22px; background: linear-gradient(#c9c9c9, #969696); border-left: 1px solid #666; font-size: 12px; }
.status button.on { background: linear-gradient(#eefafd, #8fd0e4); }
.tray { display: flex; gap: 17px; margin-left: auto; }
.group.near { margin-left: -11px; }
.status .word { width: 31px; }
.status .scale { width: 56px; gap: 2px; }
.status .scale span { font: 11px/16px "Liberation Mono", monospace; }
.status .workspace { width: 121px; gap: 1px; padding-right: 4px; }
.status .slim { width: 14px; }
.dim { opacity: .5; }
.sizer { align-self: flex-end; margin: 0 1px 1px -16px; }

/* Application menu */
.appmenu { position: absolute; left: 2px; top: 27px; width: 424px; height: 567px; display: flex; flex-direction: column; background: #d8d8d8; border: 1px solid #888; border-left-color: #eee; border-top-color: #eee; box-shadow: 1px 1px 0 #444; }
.menu-top { display: grid; align-items: center; justify-items: end; height: 36px; padding: 0 7px 0 143px; }
.menu-top > * { grid-area: 1 / 1; }
.menu-top input { width: 100%; height: 19px; background: #fff; border: 1px solid #999; border-top: 2px solid #444; border-left-color: #444; padding: 0 20px 0 4px; }
.menu-top svg { margin-right: 1px; opacity: .7; }
.menu-main { display: flex; flex: 1; }
.menu-side { width: 143px; padding-top: 7px; border-right: 1px solid #fff; }
.views { display: flex; justify-content: flex-end; padding-right: 9px; margin-bottom: 8px; }
.views button { width: 21px; height: 22px; border: 1px solid #aaa; }
.views .on { width: 22px; background: #c7def5; border-color: #3d73ad; }
.item { width: 100%; height: 44px; justify-content: flex-start; gap: 6px; padding: 0 11px 0 13px; text-align: left; }
.more { margin-left: auto; }
.menu-side hr { width: 131px; height: 2px; margin: 1px 0 1px 10px; border: 0; border-top: 1px solid #555; border-bottom: 1px solid #eee; }
.docs { flex: 1; display: flex; flex-direction: column; background: #f0f0f0; padding: 9px 10px 10px 8px; }
.docs h2 { display: flex; align-items: center; gap: 3px; height: 20px; color: #111; }
.filters { display: flex; gap: 5px; margin-top: 6px; }
.sort { height: 22px; gap: 4px; padding: 0 2px; background: #d4d0c8; border: 1px solid #999; }
.actions { display: flex; justify-content: flex-end; gap: 13px; margin-top: auto; }
.actions button { height: 24px; gap: 2px; padding: 0 4px; border: 1px solid #999; color: #111; }

.logo { position: absolute; left: 2px; top: 3px; width: 41px; height: 41px; border: 1px solid #222; background: linear-gradient(#b4b4b4, #6a6a6a); }
```
